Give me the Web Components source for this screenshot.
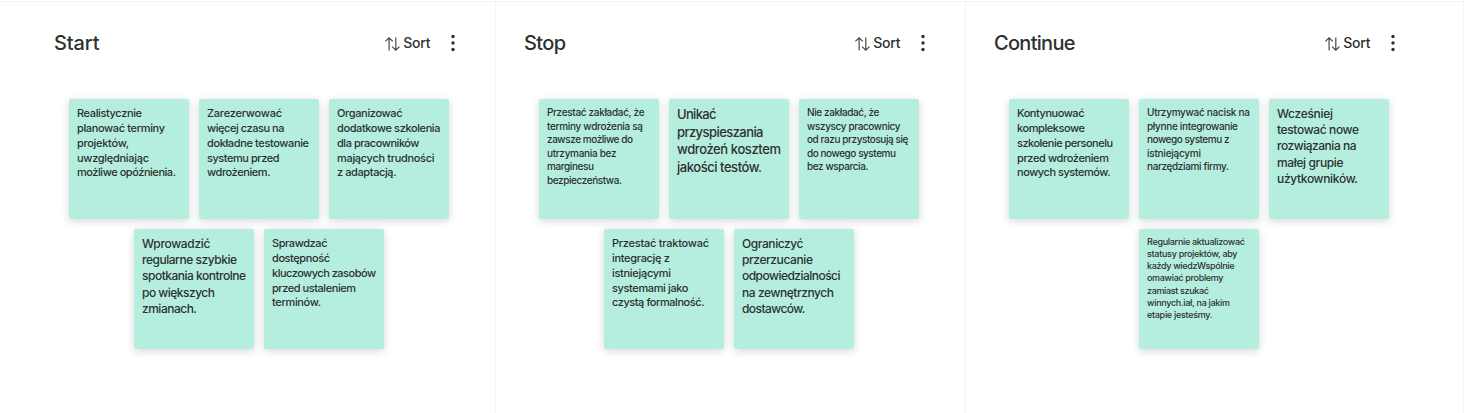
<!DOCTYPE html>
<html lang="pl">
<head>
<meta charset="utf-8">
<title>Start / Stop / Continue</title>
<style>
body{margin:0;background:#fff;font-family:Inter,"Liberation Sans",sans-serif;font-weight:450;color:#2c3130;overflow:hidden}
</style>
</head>
<body>
<retro-board>
  <retro-column>
    <fit-line slot="title" w="45.5">Start</fit-line>
    <sticky-note size="11"><fit-line w="65">Realistycznie</fit-line><fit-line w="88">planować terminy</fit-line><fit-line w="52">projektów,</fit-line><fit-line w="72">uwzględniając</fit-line><fit-line w="99">możliwe opóźnienia.</fit-line></sticky-note>
    <sticky-note size="11"><fit-line w="75">Zarezerwować</fit-line><fit-line w="77.5">więcej czasu na</fit-line><fit-line w="102">dokładne testowanie</fit-line><fit-line w="72.5">systemu przed</fit-line><fit-line w="63.5">wdrożeniem.</fit-line></sticky-note>
    <sticky-note size="11"><fit-line w="65.5">Organizować</fit-line><fit-line w="103.5">dodatkowe szkolenia</fit-line><fit-line w="82.5">dla pracowników</fit-line><fit-line w="97.5">mających trudności</fit-line><fit-line w="59.5">z adaptacją.</fit-line></sticky-note>
    <sticky-note size="12"><fit-line w="68.5">Wprowadzić</fit-line><fit-line w="95">regularne szybkie</fit-line><fit-line w="104">spotkania kontrolne</fit-line><fit-line w="73">po większych</fit-line><fit-line w="55">zmianach.</fit-line></sticky-note>
    <sticky-note size="11"><fit-line w="55.5">Sprawdzać</fit-line><fit-line w="58">dostępność</fit-line><fit-line w="104">kluczowych zasobów</fit-line><fit-line w="84">przed ustaleniem</fit-line><fit-line w="49">terminów.</fit-line></sticky-note>
  </retro-column>
  <retro-column>
    <fit-line slot="title" w="42">Stop</fit-line>
    <sticky-note size="10"><fit-line w="97.5">Przestać zakładać, że</fit-line><fit-line w="96">terminy wdrożenia są</fit-line><fit-line w="86">zawsze możliwe do</fit-line><fit-line w="69.5">utrzymania bez</fit-line><fit-line w="47">marginesu</fit-line><fit-line w="75">bezpieczeństwa.</fit-line></sticky-note>
    <sticky-note size="13"><fit-line w="39.5">Unikać</fit-line><fit-line w="86.5">przyspieszania</fit-line><fit-line w="104">wdrożeń kosztem</fit-line><fit-line w="85">jakości testów.</fit-line></sticky-note>
    <sticky-note size="10"><fit-line w="72.5">Nie zakładać, że</fit-line><fit-line w="93.5">wszyscy pracownicy</fit-line><fit-line w="101.5">od razu przystosują się</fit-line><fit-line w="89">do nowego systemu</fit-line><fit-line w="61.5">bez wsparcia.</fit-line></sticky-note>
    <sticky-note size="11"><fit-line w="97">Przestać traktować</fit-line><fit-line w="58">integrację z</fit-line><fit-line w="59">istniejącymi</fit-line><fit-line w="76.5">systemami jako</fit-line><fit-line w="92.5">czystą formalność.</fit-line></sticky-note>
    <sticky-note size="12"><fit-line w="61.5">Ograniczyć</fit-line><fit-line w="71">przerzucanie</fit-line><fit-line w="98.5">odpowiedzialności</fit-line><fit-line w="92">na zewnętrznych</fit-line><fit-line w="63.5">dostawców.</fit-line></sticky-note>
  </retro-column>
  <retro-column>
    <fit-line slot="title" w="81.5">Continue</fit-line>
    <sticky-note size="11"><fit-line w="67.5">Kontynuować</fit-line><fit-line w="68">kompleksowe</fit-line><fit-line w="96">szkolenie personelu</fit-line><fit-line w="92">przed wdrożeniem</fit-line><fit-line w="93.5">nowych systemów.</fit-line></sticky-note>
    <sticky-note size="10"><fit-line w="103">Utrzymywać nacisk na</fit-line><fit-line w="91">płynne integrowanie</fit-line><fit-line w="82.5">nowego systemu z</fit-line><fit-line w="54">istniejącymi</fit-line><fit-line w="82">narzędziami firmy.</fit-line></sticky-note>
    <sticky-note size="12"><fit-line w="56">Wcześniej</fit-line><fit-line w="82">testować nowe</fit-line><fit-line w="79.5">rozwiązania na</fit-line><fit-line w="66.5">małej grupie</fit-line><fit-line w="81">użytkowników.</fit-line></sticky-note>
    <sticky-note size="9"><fit-line w="98">Regularnie aktualizować</fit-line><fit-line w="90.5">statusy projektów, aby</fit-line><fit-line w="87.5">każdy wiedzWspólnie</fit-line><fit-line w="76.5">omawiać problemy</fit-line><fit-line w="62">zamiast szukać</fit-line><fit-line w="83">winnych.iał, na jakim</fit-line><fit-line w="65.5">etapie jesteśmy.</fit-line></sticky-note>
  </retro-column>
</retro-board>
<script>
const attach = (el, html) => { el.attachShadow({mode:'open'}).innerHTML = html; };

customElements.define('retro-board', class extends HTMLElement {
  constructor(){ super(); attach(this, `<style>
    :host{display:flex;box-sizing:border-box;width:1464px;height:412px;padding-left:26px;margin-top:1px;border-top:1px solid #f3f3f3}
  </style><slot></slot>`); }
});

customElements.define('retro-column', class extends HTMLElement {
  constructor(){ super(); attach(this, `<style>
    :host{display:block;box-sizing:border-box;flex:0 0 470px;padding:25px 0 0 28px;border-right:1px solid #f3f3f3}
    :host(:last-of-type){flex-basis:498px}
    header{display:flex;align-items:center;width:404.5px;height:32px}
    .title{flex:1;font-size:20px;line-height:32px}
    .notes{display:flex;flex-wrap:wrap;justify-content:center;gap:10px;width:380px;margin:40px 0 0 15px}
  </style><header><div class="title"><slot name="title"></slot></div><sort-button></sort-button><more-button></more-button></header>
  <div class="notes"><slot></slot></div>`); }
});

customElements.define('sort-button', class extends HTMLElement {
  constructor(){ super(); attach(this, `<style>
    :host{display:flex;align-items:center;gap:3px;font-size:14px;line-height:20px;margin-right:16px}
    svg{display:block;position:relative;top:1px}
  </style><svg width="15" height="14" viewBox="0 0 15 14" fill="none" stroke="#3c4140" stroke-width="1.15"><path d="M4.1 13.5V1M.4 4.3 4.1.8 7.8 4.3M10.8.5V13M7.1 9.7l3.7 3.5 3.7-3.5"/></svg><fit-line w="27.5">Sort</fit-line>`); }
});

customElements.define('more-button', class extends HTMLElement {
  constructor(){ super(); attach(this, `<style>:host{display:block}svg{display:block}</style>
  <svg width="12" height="18" viewBox="0 0 12 18" fill="#2c3130"><circle cx="6" cy="2.5" r="1.7"/><circle cx="6" cy="9" r="1.7"/><circle cx="6" cy="15.5" r="1.7"/></svg>`); }
});

customElements.define('sticky-note', class extends HTMLElement {
  constructor(){ super(); attach(this, `<style>
    :host{display:block;box-sizing:border-box;width:120px;height:120px;padding:7px 8px;border-radius:2px;background:#b5eedf;box-shadow:0 2px 8px rgba(0,0,0,.16);line-height:1.35}
  </style><slot></slot>`);
    this.style.fontSize = this.getAttribute('size') + 'px'; }
});

// A single line whose tracking is adjusted to a given advance width.
customElements.define('fit-line', class extends HTMLElement {
  constructor(){ super(); attach(this, `<style>:host{display:block;white-space:nowrap}span{display:inline-block}</style><span><slot></slot></span>`); }
  connectedCallback(){
    const span = this.shadowRoot.querySelector('span');
    const n = this.textContent.length;
    const gap = (+this.getAttribute('w') - span.getBoundingClientRect().width) / (n - 1);
    span.style.letterSpacing = gap.toFixed(3) + 'px';
  }
});
</script>
</body>
</html>
